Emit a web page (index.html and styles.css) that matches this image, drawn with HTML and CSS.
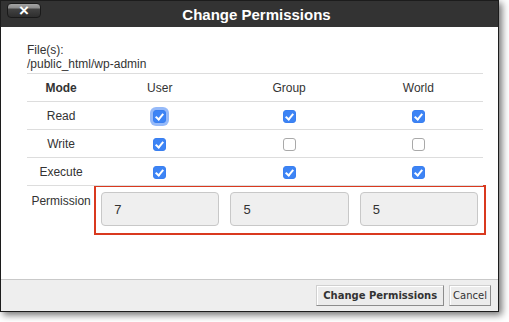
FILE: index.html
```html
<!DOCTYPE html>
<html lang="en">
<head>
  <meta charset="UTF-8">
  <title>Change Permissions</title>
  <link rel="stylesheet" href="styles.css">
</head>
<body>
  <div class="dialog">
    <div class="titlebar">
      <button class="close">&times;</button>
      <h1>Change Permissions</h1>
    </div>

    <div class="content">
      <p class="files">File(s):<br>/public_html/wp-admin</p>
      <table class="perms">
        <colgroup>
          <col class="col-mode">
          <col class="col-who">
          <col class="col-who">
          <col class="col-who">
        </colgroup>
        <tr>
          <th>Mode</th>
          <td>User</td>
          <td>Group</td>
          <td>World</td>
        </tr>
        <tr>
          <td>Read</td>
          <td><input type="checkbox" class="focused" checked></td>
          <td><input type="checkbox" checked></td>
          <td><input type="checkbox" checked></td>
        </tr>
        <tr>
          <td>Write</td>
          <td><input type="checkbox" checked></td>
          <td><input type="checkbox"></td>
          <td><input type="checkbox"></td>
        </tr>
        <tr>
          <td>Execute</td>
          <td><input type="checkbox" checked></td>
          <td><input type="checkbox" checked></td>
          <td><input type="checkbox" checked></td>
        </tr>
        <tr class="last">
          <td class="label">Permission</td>
          <td colspan="3">
            <div class="perm-box">
              <input type="text" value="7" readonly>
              <input type="text" value="5" readonly>
              <input type="text" value="5" readonly>
            </div>
          </td>
        </tr>
      </table>
    </div>

    <div class="footer">
      <button class="btn primary">Change Permissions</button>
      <button class="btn">Cancel</button>
    </div>
  </div>
</body>
</html>
```

FILE: styles.css
```css
body { margin: 0; padding-bottom: 10px; background: #fff; font-family: "Liberation Sans", Arial, sans-serif; font-size: 12px; color: #333; }
.dialog {
  box-sizing: border-box;
  width: 499px;
  height: 312px;
  border: 1px solid #1c1c1c;
  background: #fff;
  display: flex;
  flex-direction: column;
  box-shadow: 3px 3px 7px rgba(0,0,0,0.55);
}
.titlebar {
  height: 26px;
  background: #333;
  display: grid;
  grid-template-columns: 1fr auto 1fr;
  align-items: center;
}
.titlebar h1 {
  margin: 0 0 0 14px;
  color: #fff;
  font-size: 15px;
  font-weight: bold;
}
.close {
  justify-self: start;
  margin-left: 6px;
  margin-top: -8px;
  width: 34px;
  height: 15px;
  padding: 0;
  border: 1px solid #1a1a1a;
  border-radius: 4px;
  background: linear-gradient(#a4a4a4 0, #8c8c8c 4px, #434343 5px, #2e2e2e 100%);
  color: #fff;
  font: bold 17px/13px "Liberation Sans", Arial, sans-serif;
}
.content {
  flex: 1;
  padding: 16px 16px 0 26px;
}
.files {
  margin: 0;
  line-height: 14px;
  padding-bottom: 2px;
}
.perms {
  width: 456px;
  table-layout: fixed;
  border-collapse: collapse;
  border-top: 1px solid #ddd;
}
.col-mode { width: 68px; }
.col-who { width: 129px; }
.perms th, .perms td {
  height: 27px;
  padding: 0;
  border-bottom: 1px solid #ddd;
  text-align: center;
  vertical-align: middle;
}
.perms th { font-weight: bold; }
.perms tr.last td { border-bottom: none; vertical-align: top; }
.perms .label { padding-top: 8px; }

input[type=checkbox] {
  appearance: none;
  -webkit-appearance: none;
  margin: 2px 0 0;
  width: 13px;
  height: 13px;
  border: 1px solid #a9a9a9;
  border-radius: 3px;
  background: #fff;
  position: relative;
  vertical-align: middle;
}
input[type=checkbox]:checked {
  border-color: #3a7ff0;
  background: #3d84f5;
}
input[type=checkbox]:checked::after {
  content: "";
  position: absolute;
  left: 3px;
  top: 1px;
  width: 3px;
  height: 6px;
  border: solid #fff;
  border-width: 0 2px 2px 0;
  transform: rotate(40deg);
}
input.focused { box-shadow: 0 0 0 3px rgba(80,140,245,0.6); }

.perm-box {
  margin: -1px -3px 0 -1px;
  border: 2px solid #d9391f;
  padding: 5px 6px 7px 5px;
  display: grid;
  grid-template-columns: repeat(3, 1fr);
  gap: 11px;
}
.perm-box input {
  box-sizing: border-box;
  min-width: 0;
  height: 34px;
  border: 1px solid #c8c8c8;
  border-radius: 4px;
  background: #efefef;
  padding: 0 12px;
  font: 13px "Liberation Sans", Arial, sans-serif;
  color: #333;
}
.footer {
  height: 31px;
  border-top: 1px solid #c9c9c9;
  background: #eee;
  display: flex;
  justify-content: flex-end;
  align-items: center;
  gap: 5px;
  padding-right: 7px;
}
.btn {
  height: 21px;
  padding: 0 3px;
  border: 1px solid #a0a0a0;
  border-color: #d0d0d0 #8c8c8c #8c8c8c #d0d0d0;
  background: #ececec;
  box-shadow: inset 1px 1px #fff;
  color: #333;
  font: 10px "DejaVu Sans", Verdana, sans-serif;
}
.btn.primary { font-weight: bold; padding: 0 6px; }
```
